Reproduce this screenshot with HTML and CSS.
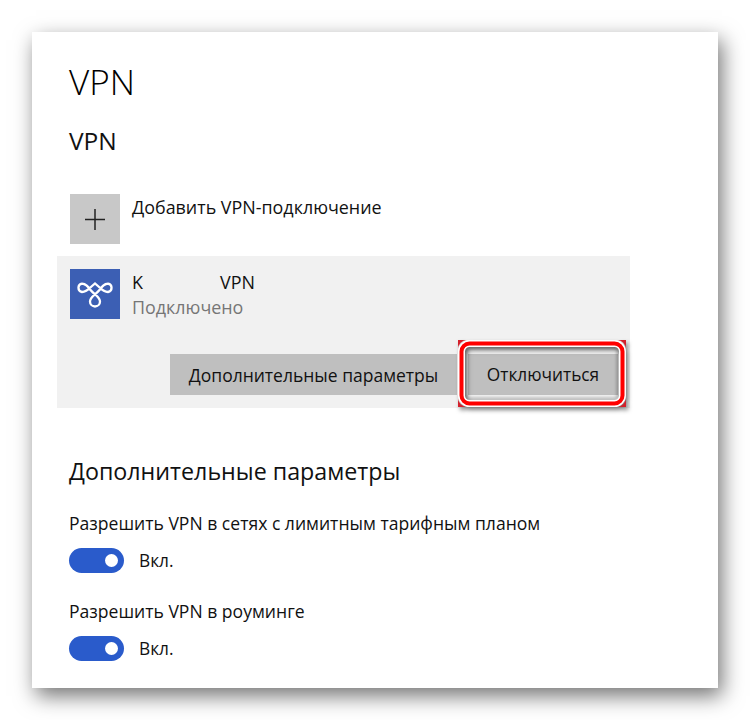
FILE: index.html
```html
<!DOCTYPE html>
<html lang="ru">
<head>
<meta charset="utf-8">
<title>VPN</title>
<link rel="stylesheet" href="styles.css">
</head>
<body>
<main class="card">
  <h1 class="title">VPN</h1>
  <h2 class="subtitle">VPN</h2>
  <div class="add-row">
    <div class="tile tile-add">
      <svg width="50" height="50" viewBox="0 0 50 50"><path d="M25 15V36M15 25.500H35" stroke="#222" stroke-width="1.500" fill="none"/></svg>
    </div>
    <div class="add-label">Добавить VPN-подключение</div>
  </div>
  <section class="panel">
    <div class="conn">
      <div class="tile tile-logo">
        <svg width="50" height="50" viewBox="0 0 50 50" fill="none" stroke="#fff" stroke-width="2.300"><path d="M12 14.700C16 14.700 18 17.500 21 21.500C24 25.500 30 28 30 32.500A5 5 0 0 1 20 32.500C20 28 26 25.500 29 21.500C32 17.500 34 14.700 38 14.700A4.200 4.200 0 0 1 38 23C34 23 31 20 28.500 17.500L25 14.500L21.500 17.500C19 20 16 23 12 23A4.200 4.200 0 0 1 12 14.700Z"/></svg>
      </div>
      <div class="conn-text">
        <div class="conn-name"><span>K</span><span>VPN</span></div>
        <div class="conn-status">Подключено</div>
      </div>
    </div>
    <div class="actions">
      <button class="btn btn-wide">Дополнительные параметры</button>
      <div class="highlight-wrap">
        <button class="btn btn-off">Отключиться</button>
        <svg class="highlight" width="168" height="67" viewBox="0 0 168 67" fill="none">
          <defs><filter id="soft" x="-10%" y="-20%" width="120%" height="140%"><feGaussianBlur stdDeviation="1.500"/></filter></defs>
          <rect x="7" y="7" width="153" height="52" rx="4" stroke="#000" stroke-opacity=".22" stroke-width="3" filter="url(#soft)"/>
          <path fill-rule="evenodd" fill="#d4202b" d="M0 0H168V67H0ZM9 0A9 9 0 0 0 0 9V58A9 9 0 0 0 9 67H159A9 9 0 0 0 168 58V9A9 9 0 0 0 159 0Z"/>
          <rect x="3.500" y="3.500" width="161" height="60" rx="8" stroke="#fff" stroke-width="7"/>
          <rect x="3.500" y="3.500" width="161" height="60" rx="8" stroke="#f00" stroke-width="4"/>
        </svg>
      </div>
    </div>
  </section>
  <h2 class="section">Дополнительные параметры</h2>
  <div class="setting">
    <div class="setting-label">Разрешить VPN в сетях с лимитным тарифным планом</div>
    <div class="toggle-row"><span class="toggle"><span class="knob"></span></span><span class="toggle-text">Вкл.</span></div>
  </div>
  <div class="setting">
    <div class="setting-label">Разрешить VPN в роуминге</div>
    <div class="toggle-row"><span class="toggle"><span class="knob"></span></span><span class="toggle-text">Вкл.</span></div>
  </div>
</main>
</body>
</html>
```
FILE: styles.css
```css
* { box-sizing: border-box; }
html, body { margin: 0; background: #fff; }
body { width: 750px; height: 720px; padding: 32px; overflow: hidden; font-family: "Open Sans", "Noto Sans", sans-serif; color: #111; }
.card { width: 686px; height: 656px; background: #fff; padding: 30px 0 0 37px; box-shadow: 4px 8px 20px rgba(0,0,0,.55); }
.title { margin: 0; font-size: 35px; font-weight: 300; line-height: 40px; height: 40px; color: #000; }
.subtitle { margin: 24px 0 0; font-size: 24.500px; font-weight: 400; line-height: 30px; height: 30px; }
.add-row { display: flex; margin: 38px 0 0 1px; height: 50px; }
.tile { width: 50px; height: 50px; flex: none; }
.tile svg { display: block; }
.tile-add { background: #c8c8c8; }
.add-label { margin-left: 12px; font-size: 17.900px; line-height: 26px; }
.panel { width: 573px; height: 152px; margin: 12px 0 0 -12px; background: #f1f1f1; padding: 13px 0 0 13px; }
.conn { display: flex; height: 50px; }
.tile-logo { background: #3c5fb4; }
.conn-text { margin-left: 12px; padding-top: 1px; font-size: 17.900px; line-height: 25px; }
.conn-name { display: flex; gap: 77px; }
.conn-status { color: #767676; }
.actions { display: flex; margin: 35px 0 0 100px; height: 41px; gap: 11px; }
.btn { border: 0; padding: 0; background: #bfbfbf; font: inherit; font-size: 17.500px; color: #111; height: 41px; }
.btn-wide { width: 287px; }
.btn-off { width: 150px; display: block; font-size: 17.300px; }
.highlight-wrap { position: relative; }
.highlight { position: absolute; left: -10px; top: -14px; overflow: visible; filter: drop-shadow(2px 3px 2px rgba(0,0,0,.5)); }
.section { margin: 48px 0 0; font-size: 23.250px; font-weight: 400; line-height: 30px; height: 30px; }
.setting { margin-top: 26px; }
.section + .setting { margin-top: 25px; }
.setting-label { font-size: 17.570px; line-height: 24px; }
.toggle-row { display: flex; align-items: center; margin-top: 12px; height: 26px; }
.toggle { width: 55px; height: 25px; border-radius: 13px; background: #2a5bcb; position: relative; flex: none; }
.knob { position: absolute; right: 6px; top: 6px; width: 13px; height: 13px; border-radius: 50%; background: #fff; }
.toggle-text { margin-left: 15px; font-size: 17.300px; }
```
